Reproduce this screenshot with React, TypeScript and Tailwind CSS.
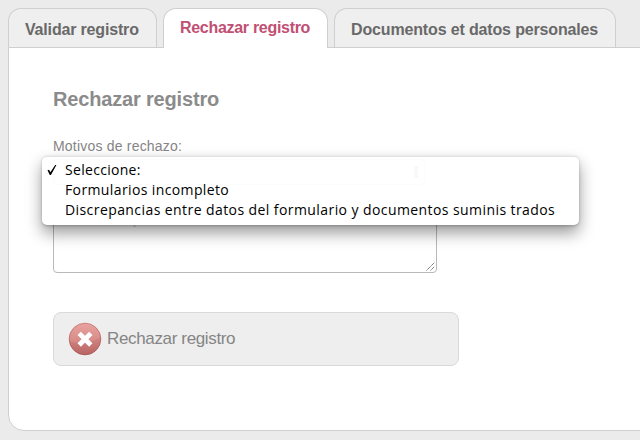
import React from 'react';

const sans = "font-['Liberation_Sans',Arial,sans-serif]";

function Tab({ label, className, textClass }: { label: string; className: string; textClass: string }) {
  return (
    <div className={`box-border shrink-0 rounded-t-[13px] border border-b-0 border-[#cfcfcf] pl-4 ${className}`}>
      <span className={`block whitespace-nowrap text-[16px] leading-5 font-bold ${textClass}`}>{label}</span>
    </div>
  );
}

function RejectIcon() {
  return (
    <svg width="34" height="34" viewBox="0 0 34 34" className="shrink-0">
      <defs>
        <linearGradient id="ball" x1="0" y1="0" x2="0" y2="1">
          <stop offset="0" stopColor="#eaa3a0" />
          <stop offset="0.5" stopColor="#d98e8a" />
          <stop offset="1" stopColor="#bd6a68" />
        </linearGradient>
        <linearGradient id="rim" x1="0" y1="0" x2="0" y2="1">
          <stop offset="0" stopColor="#cb827e" />
          <stop offset="1" stopColor="#aa5f5e" />
        </linearGradient>
      </defs>
      <circle cx="17" cy="17" r="15.8" fill="url(#ball)" stroke="url(#rim)" strokeWidth="1" />
      <path d="M1.6 19.5 Q15 24.5 32.4 15.5 A15.5 15.5 0 0 1 1.6 19.5Z" fill="#a94c4c" fillOpacity="0.17" />
      <path d="M11.2 11.4 L22.8 23 M22.8 11.4 L11.2 23" stroke="#fff" strokeWidth="4.8" />
    </svg>
  );
}

const options = [
  { label: 'Seleccione:', spacing: 'tracking-[0.3px]' },
  { label: 'Formularios incompleto', spacing: 'tracking-[0.38px]' },
  { label: 'Discrepancias entre datos del formulario y documentos suminis trados', spacing: 'tracking-[0.42px]' },
];

function Menu() {
  return (
    <div className="absolute -top-px -left-[11px] h-[69px] w-[537px] rounded-[5px] border-t border-[#e3e3e3] bg-white pt-[3px] shadow-[0_8px_16px_rgba(0,0,0,0.4),0_1px_3px_rgba(0,0,0,0.22)]">
      <div className="absolute top-[2px] left-[11px] flex h-[26px] w-[372px] items-center justify-end rounded border border-[#fcfcfc] pr-1.5">
        <span className="h-3 w-1 bg-[#f9f9f9]" />
      </div>
      {options.map((o, i) => (
        <div key={o.label} className="relative flex h-5 items-center pl-1">
          <span className="w-[19px] shrink-0">
            {i === 0 && (
              <svg width="12" height="12" viewBox="0 0 12 12">
                <path d="M1.5 6.3 L3.1 5.8 L4.4 8.2 L9.2 1 L10.4 1 L4.9 10.9 L3.8 10.9Z" fill="#000" />
              </svg>
            )}
          </span>
          <span className={`text-[14px] leading-5 whitespace-nowrap text-black font-['Open_Sans','Noto_Sans',sans-serif] ${o.spacing}`}>
            {o.label}
          </span>
        </div>
      ))}
    </div>
  );
}

export default function App() {
  return (
    <div className={`h-[440px] w-[640px] overflow-hidden bg-[#ebebeb] pt-2 pl-2 ${sans}`}>
      <div className="flex h-10 gap-1.5">
        <Tab label="Validar registro" className="h-[39px] w-[149px] bg-[#efefef] pt-[11px]" textClass="text-[#696969] tracking-[-0.17px]" />
        <Tab label="Rechazar registro" className="relative z-10 h-10 w-[165px] bg-white pt-[9px]" textClass="text-[#c14f73] tracking-[-0.3px]" />
        <Tab label="Documentos et datos personales" className="h-[39px] w-[282px] bg-[#efefef] pt-[11px]" textClass="text-[#696969] tracking-[-0.15px]" />
      </div>
      <div className="-mt-px h-[384px] w-[660px] rounded-bl-[16px] border border-[#cfcfcf] bg-white pt-[39px] pl-11">
        <h1 className="text-[20px] leading-6 font-bold tracking-[-0.17px] whitespace-nowrap text-[#8b8b8b]">
          <span>Rechazar registro</span>
        </h1>
        <p className="mt-[26px] text-[14px] leading-[18px] tracking-[0.2px] text-[#858585]">
          <span>Motivos de rechazo:</span>
        </p>
        <div className="relative mt-0.5 h-[116px] w-[384px]">
          <div className="flex h-full flex-col justify-end">
            <div className="flex h-[58px] items-end justify-end rounded border border-[#b9b9b9] bg-white p-px">
              <svg width="9" height="9" viewBox="0 0 9 9">
                <path d="M0.5 8.5 L8.5 0.5 M4.5 8.5 L8.5 4.5" stroke="#696969" strokeWidth="1" strokeDasharray="1.4 0.5" />
              </svg>
            </div>
          </div>
          <Menu />
          <span className="absolute top-[68px] left-20 h-0.5 w-[3px] rounded-b-sm bg-[#858585]" />
        </div>
        <button className="mt-[39px] flex h-[54px] w-[406px] items-center gap-[5px] rounded-[8px] border border-[#d9d9d9] bg-[#eee] pl-[14px]">
          <RejectIcon />
          <span className="text-[17px] leading-5 tracking-[-0.35px] whitespace-nowrap text-[#858585]">Rechazar registro</span>
        </button>
      </div>
    </div>
  );
}
